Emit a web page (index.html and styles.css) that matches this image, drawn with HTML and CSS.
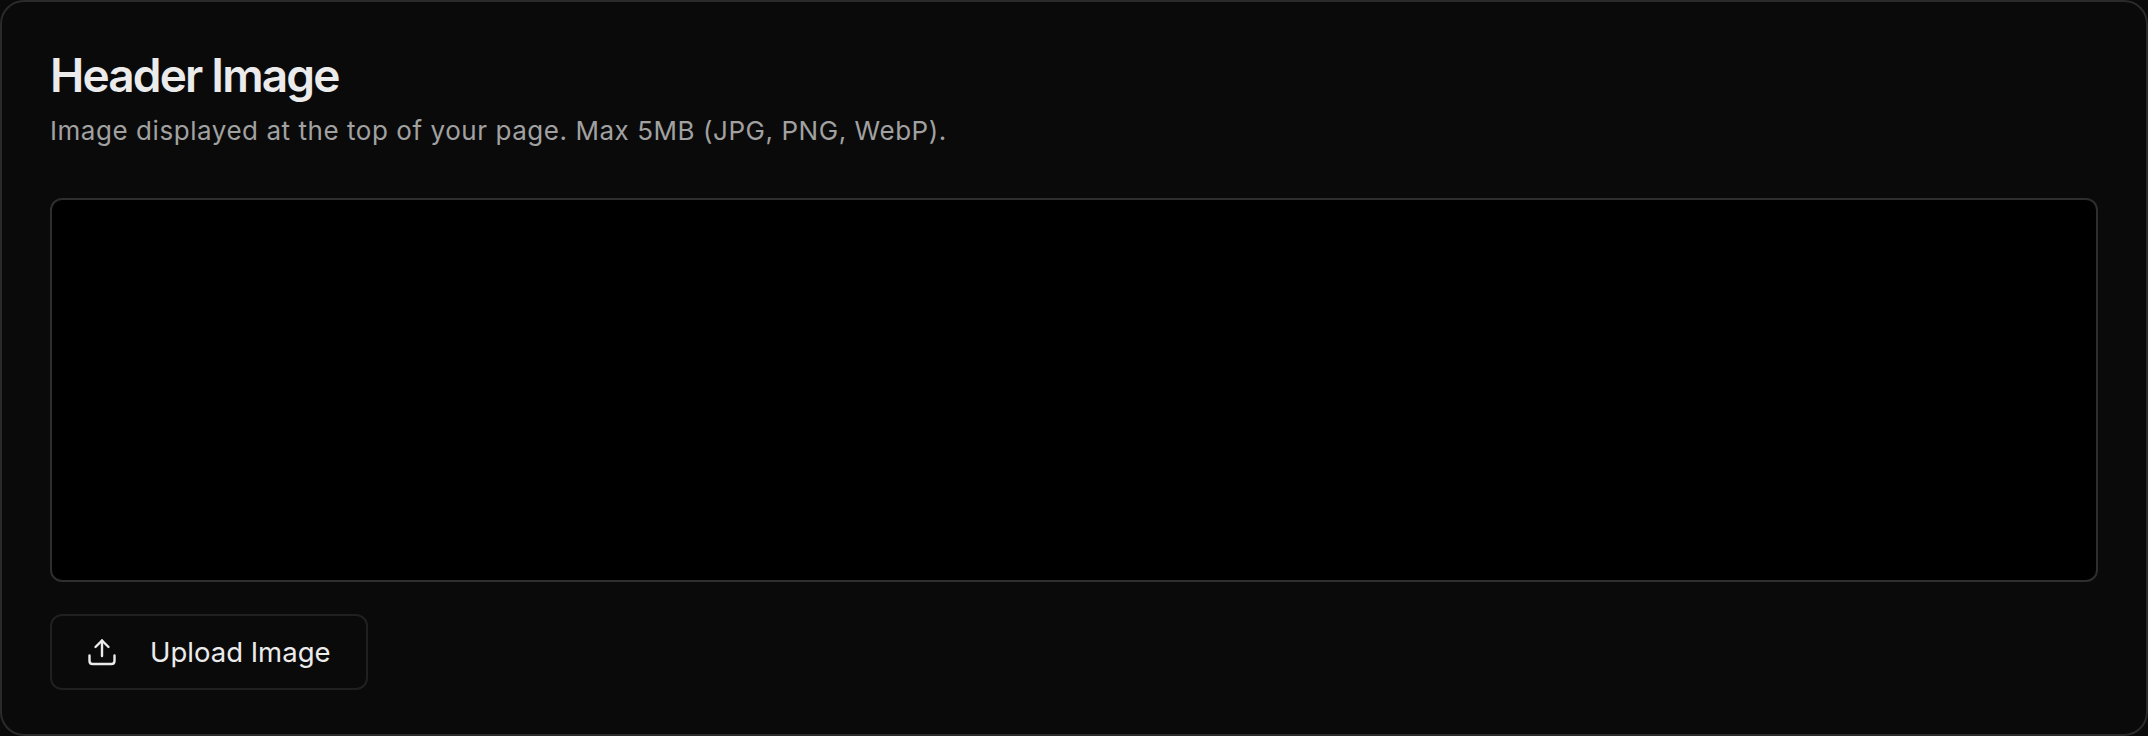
FILE: index.html
```html
<!DOCTYPE html>
<html lang="en">

<head>
  <meta charset="UTF-8" />
  <meta name="viewport" content="width=device-width, initial-scale=1.0" />
  <title>Header Image</title>
  <link rel="stylesheet" href="styles.css">
</head>

<body>
  <section class="card">
    <h2 class="card-title">Header Image</h2>
    <p class="card-desc">Image displayed at the top of your page. Max 5MB (JPG, PNG, WebP).</p>
    <div class="preview"></div>
    <button class="upload-btn">
      <svg class="upload-icon" viewBox="0 0 28 28" fill="none" stroke="currentColor" stroke-width="2.4" stroke-linecap="round" stroke-linejoin="round">
        <path d="M14 18V2.5" />
        <path d="M7.5 9L14 2.5L20.500 9" />
        <path d="M1.500 17.500V23C1.500 24.900 2.600 26 4.500 26H23.500C25.400 26 26.500 24.900 26.500 23V17.500" />
      </svg>
      <span>Upload Image</span>
    </button>
  </section>
</body>

</html>
```

FILE: styles.css
```css
* {
  box-sizing: border-box;
}

html,
body {
  height: 100%;
}

body {
  margin: 0;
  background: #0a0a0a;
  font-family: Inter, "Liberation Sans", sans-serif;
}

.card {
  display: flex;
  flex-direction: column;
  align-items: flex-start;
  height: 736px;
  padding: 45px 48px 0 48px;
  background: #0a0a0a;
  border: 2px solid #2a2a2a;
  border-radius: 24px;
}

.card-title {
  margin: 0;
  color: #ebebeb;
  font-size: 46px;
  font-weight: 600;
  line-height: 56px;
  letter-spacing: -0.04em;
}

.card-desc {
  margin: 8px 0 0 0;
  color: #a1a1a1;
  font-size: 26px;
  line-height: 40px;
  letter-spacing: 0.55px;
}

.preview {
  width: 100%;
  height: 384px;
  margin-top: 47px;
  background: #000;
  border: 2px solid #2e2e2e;
  border-radius: 12px;
}

.upload-btn {
  display: flex;
  align-items: center;
  gap: 34px;
  width: 318px;
  height: 76px;
  margin-top: 32px;
  padding: 0 0 0 36px;
  appearance: none;
  background: #0a0a0a;
  color: #ebebeb;
  border: 2px solid #202020;
  border-radius: 12px;
  font-family: inherit;
  font-size: 27.5px;
  font-weight: 400;
  white-space: nowrap;
  cursor: pointer;
}

.upload-icon {
  flex: none;
  width: 28px;
  height: 28px;
}
```
